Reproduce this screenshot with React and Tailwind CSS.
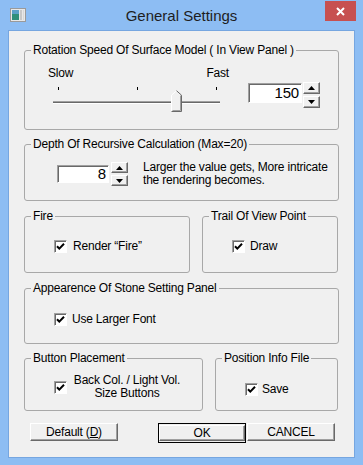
const raised =
  "border border-t-white border-l-white border-r-[#696969] border-b-[#696969] shadow-[inset_-1px_-1px_0_#a0a0a0] bg-[#f0f0f0]";
const sunken =
  "border border-t-[#a0a0a0] border-l-[#a0a0a0] border-r-white border-b-white shadow-[inset_1px_1px_0_#696969] bg-white";

const Arrow = ({ up }) => (
  <svg width="7" height="4" viewBox="0 0 7 4">
    <path d={up ? "M3.5 0L7 4H0Z" : "M0 0H7L3.5 4Z"} fill="#000" />
  </svg>
);

const Spin = ({ h }) => (
  <div className="flex flex-col gap-[2px]">
    <div className={`${raised} w-[17px] ${h} flex items-center justify-center`}>
      <Arrow up />
    </div>
    <div className={`${raised} w-[17px] ${h} flex items-center justify-center`}>
      <Arrow />
    </div>
  </div>
);

const Check = () => (
  <div className={`${sunken} w-[13px] h-[13px] shrink-0 flex items-center justify-center`}>
    <svg width="9" height="9" viewBox="0 0 9 9">
      <path d="M1 4.2L3.3 6.6L8 1.8" stroke="#000" strokeWidth="2" fill="none" />
    </svg>
  </div>
);

const Group = ({ title, className, children }) => (
  <fieldset className={`border border-[#a8a8a8] rounded-[3px] ${className}`}>
    <legend className="ml-[6px] px-[2px] leading-[14px]">{title}</legend>
    {children}
  </fieldset>
);

const Slider = () => (
  <svg width="181" height="34" viewBox="0 0 181 34">
    <line x1="10.5" y1="7" x2="10.5" y2="10" stroke="#000" />
    <line x1="89.5" y1="7" x2="89.5" y2="10" stroke="#000" />
    <line x1="168.5" y1="7" x2="168.5" y2="10" stroke="#000" />
    <rect x="5" y="21" width="167" height="1" fill="#a0a0a0" />
    <rect x="5" y="22" width="167" height="1" fill="#696969" />
    <rect x="5" y="23" width="167" height="1" fill="#ffffff" />
    <path d="M123 15L128.5 10L134 15V32H123Z" fill="#f0f0f0" />
    <path d="M123.5 31.5V15.2L128.5 10.7" stroke="#fff" fill="none" />
    <path d="M128.5 10.7L133.5 15.2V31.5H123.5" stroke="#696969" fill="none" />
    <path d="M132.5 15.6V30.5H124.5" stroke="#a0a0a0" fill="none" />
  </svg>
);

export default function App() {
  return (
    <div className="w-[363px] h-[465px] bg-[#8dbdf3] flex flex-col font-['Liberation_Sans',Arial,sans-serif] text-[12px] tracking-[-0.2px] text-black">
      <div className="h-[30px] grid grid-cols-[1fr_auto_1fr] items-start">
        <div className="pl-[10px] pt-[8px]">
          <svg width="16" height="14" viewBox="0 0 16 14">
            <rect x="0.5" y="0.5" width="15" height="13" fill="#e8e8e8" stroke="#9a9a9a" />
            <rect x="2" y="2" width="7" height="10" fill="#2f8f7a" />
            <rect x="2" y="2" width="7" height="4" fill="#5aa0c8" />
            <rect x="10" y="2" width="2" height="10" fill="#c8c8c8" />
            <rect x="13" y="2" width="1" height="10" fill="#d8d8d8" />
          </svg>
        </div>
        <div className="pt-[6px] text-[15px] leading-[20px] tracking-normal text-[#1e1e1e]">General Settings</div>
        <div className="flex justify-end pr-[7px] pt-[1px]">
          <div className="w-[31px] h-[20px] bg-[#c75050] flex items-center justify-center">
            <svg width="9" height="9" viewBox="0 0 9 9">
              <path d="M1 1L8 8M8 1L1 8" stroke="#fff" strokeWidth="2" />
            </svg>
          </div>
        </div>
      </div>

      <div className="mx-[8px] w-[347px] h-[428px] border border-[#76a6e0] bg-[#f0f0f0] px-[15px] pt-[12px] flex flex-col">
        <Group title="Rotation Speed Of Surface Model ( In View Panel )" className="h-[87px]">
          <div className="flex pl-[23px] pt-[9px]">
            <div className="w-[181px]">
              <div className="flex justify-between leading-[14px]">
                <span>Slow</span>
                <span>Fast</span>
              </div>
              <Slider />
            </div>
            <div className="flex ml-[19px] mt-[16px] gap-[1px]">
              <div className={`${sunken} w-[54px] h-[20px] mt-[1px] text-right pr-[2px] text-[15px] leading-[17px]`}>150</div>
              <Spin h="h-[12px]" />
            </div>
          </div>
        </Group>

        <Group title="Depth Of Recursive Calculation (Max=20)" className="h-[64px] mt-[7px]">
          <div className="flex items-start pl-[32px] pt-[11px]">
            <div className={`${sunken} w-[52px] h-[18px] mt-[3px] text-right pr-[2px] text-[15px] leading-[16px]`}>8</div>
            <div className="ml-[2px]">
              <Spin h="h-[11px]" />
            </div>
            <div className="ml-[15px] -mt-[1px] leading-[13px]">
              <div>Larger the value gets, More intricate</div>
              <div>the rendering becomes.</div>
            </div>
          </div>
        </Group>

        <div className="flex gap-[12px] mt-[8px]">
          <Group title="Fire" className="h-[64px] w-[166px]">
            <div className="flex items-center gap-[6px] pl-[29px] pt-[14px]">
              <Check />
              <span>Render “Fire”</span>
            </div>
          </Group>
          <Group title="Trail Of View Point" className="h-[64px] w-[136px]">
            <div className="flex items-center gap-[5px] pl-[29px] pt-[14px]">
              <Check />
              <span>Draw</span>
            </div>
          </Group>
        </div>

        <Group title="Appearence Of Stone Setting Panel" className="h-[63px] mt-[8px]">
          <div className="flex items-center gap-[5px] pl-[29px] pt-[15px]">
            <Check />
            <span>Use Larger Font</span>
          </div>
        </Group>

        <div className="flex gap-[12px] mt-[7px]">
          <Group title="Button Placement" className="h-[60px] w-[179px]">
            <div className="flex items-center gap-[4px] pl-[29px] pt-[9px]">
              <Check />
              <div className="text-center leading-[13px] w-[112px]">
                <div>Back Col. / Light Vol.</div>
                <div>Size Buttons</div>
              </div>
            </div>
          </Group>
          <Group title="Position Info File" className="h-[60px] w-[123px]">
            <div className="flex items-center gap-[4px] pl-[29px] pt-[15px]">
              <Check />
              <span>Save</span>
            </div>
          </Group>
        </div>

        <div className="flex mt-[12px] pl-[6px]">
          <button className={`${raised} w-[88px] h-[18px] leading-[14px]`}>
            Default (<span className="underline">D</span>)
          </button>
          <div className="ml-[40px] border border-black">
            <button className={`${raised} w-[86px] h-[16px] leading-[12px]`}>OK</button>
          </div>
          <button className={`${raised} w-[88px] h-[18px] leading-[14px] ml-[1px]`}>CANCEL</button>
        </div>
      </div>
    </div>
  );
}
